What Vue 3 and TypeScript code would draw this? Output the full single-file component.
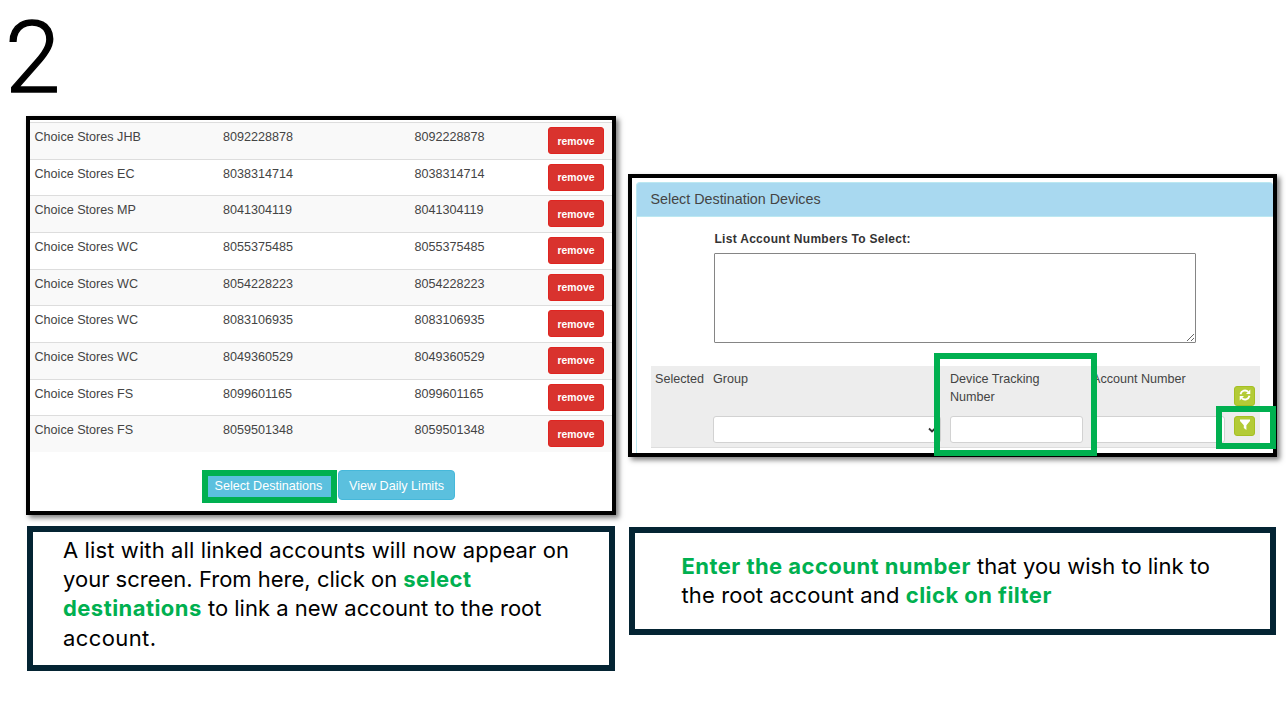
<script setup lang="ts">
import { ref } from 'vue'

interface Account {
  name: string
  number: string
}

const accounts = ref<Account[]>([
  { name: 'Choice Stores JHB', number: '8092228878' },
  { name: 'Choice Stores EC', number: '8038314714' },
  { name: 'Choice Stores MP', number: '8041304119' },
  { name: 'Choice Stores WC', number: '8055375485' },
  { name: 'Choice Stores WC', number: '8054228223' },
  { name: 'Choice Stores WC', number: '8083106935' },
  { name: 'Choice Stores WC', number: '8049360529' },
  { name: 'Choice Stores FS', number: '8099601165' },
  { name: 'Choice Stores FS', number: '8059501348' }
])

const accountList = ref<string>('')
const group = ref<string>('')
const trackingNumber = ref<string>('')
const accountNumber = ref<string>('')

const remove = (index: number): void => {
  accounts.value.splice(index, 1)
}
</script>

<template>
  <main class="slide">
    <h1 class="step">2</h1>

    <div class="columns">
      <section class="left">
        <div class="shot accounts">
          <div class="rows">
            <div v-for="(account, i) in accounts" :key="account.number" class="row">
              <span>{{ account.name }}</span>
              <span>{{ account.number }}</span>
              <span>{{ account.number }}</span>
              <button class="remove" @click="remove(i)">remove</button>
            </div>
          </div>
          <div class="actions">
            <button class="action marked">Select Destinations</button>
            <button class="action">View Daily Limits</button>
          </div>
        </div>

        <div class="callout callout-left">
          <div class="line l1">A list with all linked accounts will now appear on</div>
          <div class="line">your screen. From here, click on <b>select</b></div>
          <div class="line"><b>destinations</b> to link a new account to the root</div>
          <div class="line l4">account.</div>
        </div>
      </section>

      <section class="right">
        <div class="shot devices">
          <div class="title">Select Destination Devices</div>
          <div class="body">
            <label for="list">List Account Numbers To Select:</label>
            <textarea id="list" v-model="accountList"></textarea>

            <div class="filters">
              <div class="cell">Selected</div>
              <div class="cell">
                <div class="head">Group</div>
                <div class="field select">
                  <select v-model="group" aria-label="Group"></select>
                  <svg viewBox="0 0 8 6"><path d="M1 1.5 4 4.5 7 1.5" /></svg>
                </div>
              </div>
              <div class="cell">
                <div class="head">Device Tracking<br />Number</div>
                <input v-model="trackingNumber" class="field" aria-label="Device Tracking Number" />
              </div>
              <div class="cell">
                <div class="head">Account Number</div>
                <input v-model="accountNumber" class="field" aria-label="Account Number" />
              </div>
              <div class="tools">
                <button class="tool" aria-label="Refresh">
                  <svg viewBox="0 0 12 12">
                    <path class="arc" d="M1.5 5.2A4.6 4.6 0 0 1 9.3 2.9M10.5 6.8A4.6 4.6 0 0 1 2.7 9.1" />
                    <path class="solid" d="M11.3 0.6V4.9H7ZM0.7 11.4V7.1H5Z" />
                  </svg>
                </button>
                <button class="tool" aria-label="Filter">
                  <svg viewBox="0 0 12 12">
                    <path class="solid" d="M1 0.5H11V2L7.4 6.2V11L4.8 9V6.2L1 2Z" />
                  </svg>
                </button>
              </div>
            </div>
          </div>
          <div class="mark mark-tracking"></div>
          <div class="mark mark-filter"></div>
        </div>

        <div class="callout callout-right">
          <div class="line"><b>Enter the account number</b> that you wish to link to</div>
          <div class="line r2">the root account and <b>click on filter</b></div>
        </div>
      </section>
    </div>
  </main>
</template>

<style>
body {
  margin: 0;
  background: #fff;
}
</style>

<style scoped>
* {
  box-sizing: border-box;
}

button,
input,
select,
textarea {
  font-family: inherit;
  margin: 0;
}

.slide {
  width: 1286px;
  height: 707px;
  background: #fff;
  font-family: "Liberation Sans", Arial, sans-serif;
  color: #444;
}

.step {
  margin: 0;
  height: 116px;
  padding-left: 5px;
  font: 300 100px/115px Roboto, sans-serif;
  -webkit-text-stroke: 1.4px #000;
  color: #000;
}

.columns {
  display: flex;
  gap: 12px;
  padding-left: 26px;
}

.left {
  width: 590px;
}

.right {
  width: 649px;
  padding-top: 58px;
}

.shot {
  position: relative;
  border: 4px solid #000;
  background: #fff;
  box-shadow: 3px 3px 5px rgba(0, 0, 0, 0.5);
}

.accounts {
  height: 399px;
  padding-top: 2px;
}

.row {
  display: grid;
  grid-template-columns: 188.5px 191.5px 133.5px 56px;
  height: 36.67px;
  padding: 4px 0 0 4.5px;
  border-top: 1px solid #ddd;
  font-size: 12.6px;
  line-height: 20px;
}

.row:nth-child(odd) {
  background: #f9f9f9;
}

.remove {
  width: 56px;
  height: 27px;
  padding: 1px 0 0;
  border: 1px solid #e02420;
  border-radius: 3px;
  background: #d9332e;
  color: #fff;
  font-size: 10.4px;
  font-weight: 700;
}

.actions {
  display: flex;
  gap: 1px;
  padding: 18px 0 0 172px;
}

.action {
  width: 117px;
  height: 30px;
  padding: 2px 0 0;
  border: 1px solid #46b8da;
  border-radius: 4px;
  background: #5bc0de;
  color: #fff;
  font-size: 12.6px;
  white-space: nowrap;
}

.action.marked {
  width: 135px;
  height: 33px;
  padding: 0 2px 0 0;
  border: 6px solid #00b050;
  border-radius: 0;
  line-height: 19px;
}

.callout {
  margin-left: 1px;
  border: 6px solid #042433;
  background: #fff;
  font-family: Inter, sans-serif;
  font-size: 22px;
  line-height: 29.2px;
  color: #000;
}

.callout b {
  color: #00b050;
  font-weight: 700;
  letter-spacing: 0.45px;
}

.callout-left {
  width: 588px;
  height: 145px;
  margin-top: 11px;
  padding: 4px 0 0 30px;
}

.callout-right {
  width: 647px;
  height: 108px;
  margin-top: 70px;
  padding: 19px 0 0 46.5px;
}

.line {
  white-space: nowrap;
}

.l1,
.r2 {
  letter-spacing: 0.11px;
}

.l4 {
  letter-spacing: 0.4px;
}

.devices {
  height: 283px;
  padding: 4px 0 0 4px;
}

.title {
  height: 35px;
  padding-left: 13.5px;
  border: 1px solid #bce8f1;
  border-right: 0;
  border-radius: 4px 4px 0 0;
  background: #a9d9f0;
  font-size: 14.3px;
  line-height: 33px;
}

.body {
  height: 236px;
  padding: 14px 0 0 14px;
  border-left: 1px solid #bce8f1;
}

label {
  display: block;
  height: 22px;
  margin-left: 63.5px;
  font-size: 12px;
  font-weight: 700;
  line-height: 17px;
  letter-spacing: 0.29px;
  color: #333;
}

textarea {
  display: block;
  width: 482px;
  height: 90px;
  margin-left: 63px;
  border: 1px solid #858585;
  border-radius: 1px;
}

.filters {
  display: grid;
  grid-template-columns: 62px 237px 142px 142px 26px;
  width: 609px;
  height: 82px;
  margin-top: 23px;
  border-bottom: 1px solid #ddd;
  background: #ededed;
  font-size: 12.6px;
  line-height: 18px;
}

.cell {
  padding: 4px 0 0;
}

.cell:first-child {
  padding-left: 4px;
}

.head {
  height: 46px;
}

.field {
  display: block;
  width: 133px;
  height: 27px;
  border: 1px solid #d2d2d2;
  border-radius: 3px;
  background: #fff;
}

.select {
  display: flex;
  align-items: center;
  width: 228px;
  padding-right: 4px;
}

.select select {
  flex: 1;
  border: 0;
  background: none;
  appearance: none;
}

.select svg {
  width: 8px;
  height: 6px;
  fill: none;
  stroke: #333;
  stroke-width: 1.8;
}

.tools {
  display: flex;
  flex-direction: column;
  gap: 10px;
  padding-top: 20px;
}

.tool {
  display: flex;
  justify-content: center;
  width: 21px;
  height: 20px;
  padding: 2px 0 0;
  border: 1px solid #a5bf22;
  border-radius: 3px;
  background: #b3cb36;
}

.tool svg {
  width: 12px;
  height: 12px;
}

.arc {
  fill: none;
  stroke: #fff;
  stroke-width: 1.8;
}

.solid {
  fill: #fff;
}

.mark {
  position: absolute;
  border: 6px solid #00b050;
}

.mark-tracking {
  left: 302px;
  top: 175px;
  width: 163px;
  height: 103px;
}

.mark-filter {
  left: 584px;
  top: 228px;
  width: 60px;
  height: 43px;
}
</style>
